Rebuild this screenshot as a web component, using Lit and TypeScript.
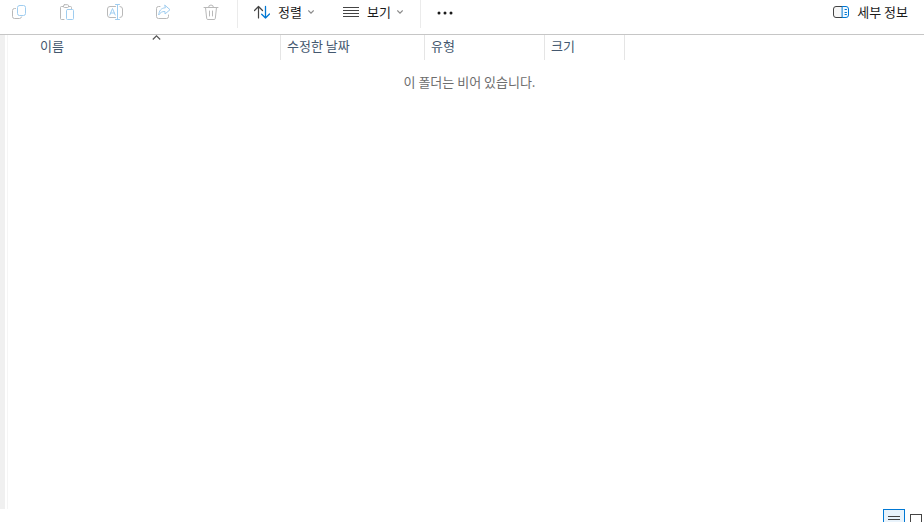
import { LitElement, html, css, svg } from "lit";
import { customElement } from "lit/decorators.js";

const icon = (body: unknown, size = 16) => html`
  <svg width=${size} height=${size} viewBox="0 0 ${size} ${size}" fill="none"
    stroke="currentColor" stroke-linecap="round" stroke-linejoin="round" aria-hidden="true">${body}</svg>`;

const copyIcon = icon(svg`
  <path d="M4.5 4.5H3.5a2 2 0 0 0-2 2v6a2 2 0 0 0 2 2h5a2 2 0 0 0 2-1.5"/>
  <rect class="accent" x="6.500" y="1.500" width="8" height="10" rx="2"/>`);
const pasteIcon = icon(svg`
  <path d="M4.500 2.500H2.500a1 1 0 0 0-1 1v11a1 1 0 0 0 1 1h2.500M9.500 2.500h2a1 1 0 0 1 1 1v1"/>
  <rect x="4.500" y="0.700" width="5" height="2.800" rx="1"/>
  <rect class="accent" x="7.500" y="5.500" width="7" height="10" rx="1"/>`);
const renameIcon = icon(svg`
  <path d="M8.500 2.500H3a2.500 2.500 0 0 0-2.500 2.500v6A2.500 2.500 0 0 0 3 13.500h5.500M13 2.500a2.500 2.500 0 0 1 2.500 2.500v6a2.500 2.500 0 0 1-2.500 2.500"/>
  <path class="accent" d="M10.500 .5v15M8.500 .5h4M8.500 15.500h4M2.800 11 5.500 4.500 8.200 11M3.700 9h3.600"/>`);
const shareIcon = icon(svg`
  <path d="M5 2.500H3.500a2 2 0 0 0-2 2v8a2 2 0 0 0 2 2h8a2 2 0 0 0 2-2v-1.500"/>
  <path class="accent" d="M10 1.300 15 5.700 10 10V7.500C7 7.300 5.300 8.600 3.700 11 4 7 6 4 10 3.800z"/>`);
const deleteIcon = icon(svg`
  <path d="M1 3.500h14M5.500 3.500a2.500 2.500 0 0 1 5 0M2.500 3.500l1.200 11a1.200 1.200 0 0 0 1.200 1h6.200a1.200 1.200 0 0 0 1.200-1l1.200-11M6.500 7v5M9.500 7v5"/>`);
const sortIcon = icon(svg`
  <path stroke-width="1.200" d="M4.500 14V2.500M.5 6.500l4-4 4 4"/>
  <path class="accent" stroke-width="1.300" d="M11.500 2.500V14M7.700 10.200l3.800 3.800 4-4"/>`);
const viewIcon = icon(svg`<path stroke-linecap="butt" d="M0 3.500h16M0 6.500h16M0 9.500h16M0 12.500h16"/>`);
const moreIcon = icon(svg`
  <g fill="currentColor" stroke="none"><circle cx="2" cy="9" r="1.500"/><circle cx="8" cy="9" r="1.500"/><circle cx="14" cy="9" r="1.500"/></g>`);
const detailsIcon = icon(svg`
  <path fill="#f7f7f7" d="M10.500 2.500H3a2.500 2.500 0 0 0-2.500 2.500v6A2.500 2.500 0 0 0 3 13.500h7.500"/>
  <path class="accent" fill="#f3faff" d="M9.500 2.500H13a2.500 2.500 0 0 1 2.500 2.500v6a2.500 2.500 0 0 1-2.500 2.500H9.500z"/>
  <path class="accent" d="M12 5.500h1.500M12 8.500h1.500M12 10.500h1.500"/>`);
const chevron = html`<svg class="chevron" width="6" height="6" viewBox="0 0 6 6" fill="none"
  stroke="currentColor" stroke-width="1.200" aria-hidden="true"><path d="M.3 1.500 3 4.200 5.700 1.500"/></svg>`;

const fileActions = [
  { label: "복사", glyph: copyIcon },
  { label: "붙여넣기", glyph: pasteIcon },
  { label: "이름 바꾸기", glyph: renameIcon },
  { label: "공유", glyph: shareIcon },
  { label: "삭제", glyph: deleteIcon },
];

const base = css`
  * { box-sizing: border-box; }
  svg { display: block; flex: none; }
  button {
    display: flex;
    align-items: center;
    margin: 0;
    padding: 0;
    border: 0;
    background: none;
    color: inherit;
    font: inherit;
    white-space: nowrap;
  }
`;

@customElement("command-bar")
export class CommandBar extends LitElement {
  static styles = [base, css`
    :host {
      display: flex;
      align-items: flex-start;
      flex: none;
      padding-bottom: 6px;
      border-bottom: 1px solid #c6c6c6;
      color: #1a1a1a;
    }
    button { height: 24px; gap: 8px; }
    .accent { stroke: #0078d4; }
    .group { display: flex; padding: 0 16px; }
    .files { gap: 32px; padding: 0 18px 0 11px; }
    .files button { color: #b9b9b9; }
    .files .accent { stroke: #9fcdf0; }
    .menus { gap: 29px; padding-right: 17px; }
    .menus svg { color: #444; }
    .menus .chevron { color: #8a8a8a; margin-left: -2px; }
    .divider { width: 1px; height: 28px; background: #ebebeb; }
    .end { margin-left: auto; }
    .end svg { color: #444; }
  `];

  render() {
    return html`
      <div class="group files">
        ${fileActions.map((a) => html`<button disabled aria-label=${a.label}>${a.glyph}</button>`)}
      </div>
      <div class="divider"></div>
      <div class="group menus">
        <button>${sortIcon}<span>정렬</span>${chevron}</button>
        <button>${viewIcon}<span>보기</span>${chevron}</button>
      </div>
      <div class="divider"></div>
      <div class="group"><button aria-label="자세히 보기">${moreIcon}</button></div>
      <div class="group end"><button>${detailsIcon}<span>세부 정보</span></button></div>
    `;
  }
}

@customElement("file-list")
export class FileList extends LitElement {
  static styles = [base, css`
    :host { display: block; flex: 1; min-width: 0; }
    table { border-collapse: separate; border-spacing: 0; table-layout: fixed; width: 617px; }
    .name { width: 273px; }
    .date { width: 144px; }
    .type { width: 120px; }
    .size { width: 80px; }
    th {
      position: relative;
      height: 25px;
      padding: 0 0 0 6px;
      border-right: 1px solid #e5e5e5;
      color: #44586f;
      font-weight: 400;
      text-align: left;
      vertical-align: top;
    }
    th.name { padding-left: 32px; }
    th button { width: 100%; height: 24px; padding-bottom: 2px; }
    .sorted { position: absolute; top: 0; left: 144px; color: #555; }
    .empty { margin: 0; padding: 12px 0 0 7px; line-height: 20px; text-align: center; color: #6d6d6d; }
  `];

  render() {
    return html`
      <table>
        <thead>
          <tr>
            <th class="name" scope="col" aria-sort="ascending">
              <button>이름</button>
              <svg class="sorted" width="9" height="6" viewBox="0 0 9 6" fill="none"
                stroke="currentColor" stroke-width="1.200" aria-hidden="true"><path d="M.8 4.500 4.500 .9 8.200 4.500"/></svg>
            </th>
            <th class="date" scope="col"><button>수정한 날짜</button></th>
            <th class="type" scope="col"><button>유형</button></th>
            <th class="size" scope="col"><button>크기</button></th>
          </tr>
        </thead>
      </table>
      <p class="empty">이 폴더는 비어 있습니다.</p>
    `;
  }
}

@customElement("view-switch")
export class ViewSwitch extends LitElement {
  static styles = [base, css`
    :host {
      display: flex;
      flex: none;
      justify-content: flex-end;
      height: 13px;
      overflow: hidden;
      color: #444;
    }
    button { justify-content: center; width: 22px; height: 22px; }
    .active { border: 1px solid #0078d4; background: #e9f3fb; }
    .large { justify-content: flex-end; width: 19px; padding-right: 2px; }
  `];

  render() {
    return html`
      <button class="active" aria-label="자세히" aria-pressed="true">
        <svg width="12" height="12" viewBox="0 0 12 12" fill="none" stroke="currentColor" aria-hidden="true">
          <path d="M0 2.500h12M0 5.500h12M0 8.500h12"/>
        </svg>
      </button>
      <button class="large" aria-label="큰 아이콘" aria-pressed="false">
        <svg width="12" height="12" viewBox="0 0 12 12" fill="none" stroke="currentColor" aria-hidden="true">
          <rect x=".5" y=".5" width="11" height="11"/>
        </svg>
      </button>
    `;
  }
}

@customElement("app-root")
export class AppRoot extends LitElement {
  static styles = css`
    :host {
      display: flex;
      flex-direction: column;
      min-height: 100vh;
      background: #fff;
      font: 13px/20px "Noto Sans CJK KR", "Noto Sans", sans-serif;
    }
    main { display: flex; flex: 1; }
    .splitter { width: 8px; border-left: 5px solid #f0f0f0; border-right: 1px solid #f5f5f5; box-sizing: border-box; }
  `;

  render() {
    return html`
      <command-bar></command-bar>
      <main>
        <div class="splitter"></div>
        <file-list></file-list>
      </main>
      <view-switch></view-switch>
    `;
  }
}
